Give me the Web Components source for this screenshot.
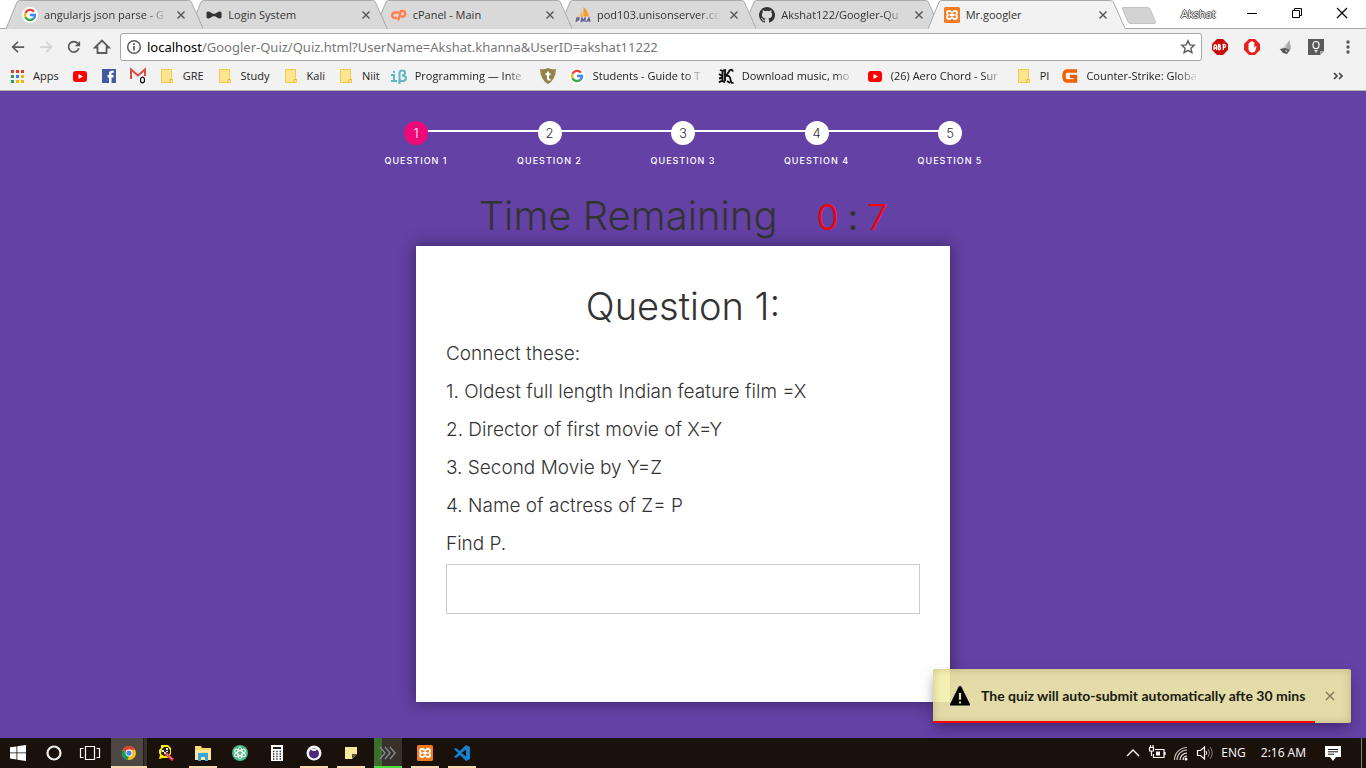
<!DOCTYPE html>
<html lang="en">
<head>
<meta charset="utf-8">
<title>Mr.googler</title>
<style>
  html, body { margin: 0; height: 100%; }
  body { font: 12px/16px "Open Sans", "Noto Sans", sans-serif; color: #222; }
</style>
</head>
<body>
<desktop-screen></desktop-screen>
<script>
const ICONS = {
  google: '<circle cx="8" cy="8" r="8" fill="#fff"/><g fill="none" stroke-width="2.4"><path d="M11.9 4.6A5 5 0 0 0 3.5 5.9" stroke="#ea4335"/><path d="M3.5 5.9a5 5 0 0 0 0 4.3" stroke="#fbbc05"/><path d="M3.5 10.2a5 5 0 0 0 8 1.4" stroke="#34a853"/><path d="M8 8h5a5 5 0 0 1-1.6 3.7" stroke="#4285f4"/></g>',
  bowtie: '<path d="M.5 5.500Q1.500 4 3.500 4.800L7 6.800h2l3.500-2q2-.8 3 .7v5q-1 1.500-3 .7L9 9.200H7l-3.500 2q-2 .8-3-.7z" fill="#333"/>',
  cpanel: '<g fill="none" stroke="#ff7f50" stroke-width="2.4" stroke-linecap="round" stroke-linejoin="round"><path d="M7 5.5H4a2.7 2.7 0 0 0 0 5.5h1.3"/><path d="M7.5 12.5 9.8 4H12a2.8 2.8 0 0 1 0 5.5h-1.5"/></g>',
  pma: '<path d="M4 9q2-1 3-6l1 6z" fill="#f9b35c"/><path d="M8.500 9V0q5 4 5 9z" fill="#f89c2a"/><path d="M2 9.500h13" stroke="#fbc98c"/><g fill="none" stroke="#5f618d" stroke-width="1.300"><path d="M1 15l1-4h2l-.5 2H2M6 15l1-4 1 3 2-3v4M11.500 15l2.500-4 1 4m-2-1.500h2"/></g>',
  github: '<path fill="#333" fill-rule="evenodd" d="M8 0a8 8 0 0 0-2.530 15.590c.4.070.550-.170.550-.380v-1.490c-2.010.370-2.530-.490-2.690-.940-.090-.230-.480-.940-.820-1.130-.280-.150-.680-.520-.010-.530.630-.010 1.080.580 1.230.820.720 1.210 1.870.870 2.330.660.070-.520.280-.870.510-1.070-1.780-.200-3.640-.890-3.640-3.950 0-.870.310-1.590.820-2.150-.080-.200-.360-1.020.080-2.120 0 0 .670-.210 2.200.820a7.500 7.500 0 0 1 4 0c1.530-1.040 2.200-.820 2.200-.820.440 1.100.160 1.920.080 2.120.510.560.820 1.270.820 2.150 0 3.070-1.870 3.750-3.650 3.950.290.250.540.730.540 1.480v2.200c0 .210.150.460.550.380A8 8 0 0 0 8 0z"/>',
  xampp: '<rect width="16" height="16" rx="1.500" fill="#f47b20"/><path d="M5 4h1.200L8 6 9.800 4H11q2 0 2 2 0 1.200-1 2 1 .8 1 2 0 2-2 2H9.800L8 10l-1.800 2H5q-2 0-2-2 0-1.200 1-2-1-.8-1-2 0-2 2-2zM5.500 8h5" fill="none" stroke="#fff" stroke-width="1.800" stroke-linejoin="round"/>',
  close: '<path d="M4 4l8 8M12 4l-8 8" stroke="#5a5a5a" stroke-width="1.700"/>',
  back: '<path d="M15 8H2M8 2 2 8l6 6" fill="none" stroke="#5a5a5a" stroke-width="2"/>',
  forward: '<path d="M1 8h13M8 2l6 6-6 6" fill="none" stroke="#d2d2d2" stroke-width="2"/>',
  reload: '<path d="M13.500 9.500A6 6 0 1 1 12.300 3.800" fill="none" stroke="#5a5a5a" stroke-width="2"/><path d="M15 1v6H9z" fill="#5a5a5a"/>',
  home: '<path d="M1 8.500 8 1.500l7 7h-2.500V14h-9V8.500z" fill="none" stroke="#5a5a5a" stroke-width="1.800"/>',
  info: '<circle cx="8" cy="8" r="6.300" fill="none" stroke="#5a5a5a" stroke-width="1.500"/><path d="M8 7v4.500M8 4.300V6" stroke="#5a5a5a" stroke-width="1.700"/>',
  star: '<path d="M8 1.800l1.800 4.100 4.400.4-3.300 3 1 4.300L8 11.300l-3.900 2.300 1-4.300-3.300-3 4.400-.4z" fill="none" stroke="#5a5a5a" stroke-width="1.400"/>',
  abp: '<path d="M5 0h6l5 5v6l-5 5H5l-5-5V5z" fill="#c70d0c"/><g fill="none" stroke="#fff" stroke-width="1.300"><path d="M2 11V7q1.300-2.500 2.600 0v4M2 9h2.600M6.500 5.500V10.500h1.300q1.500-1.500-.2-2.600 1.500-1-.2-2.300zM11.300 11V5.500h1.300q2 1.500 0 2.900h-1.300"/></g>',
  hand: '<path d="M5 0h6l5 5v6l-5 5H5l-5-5V5z" fill="#e8231f"/><path d="M4.500 4.500q.7-.8 1.300 0V7V3q.8-1 1.500 0v4-4.500q.8-.9 1.500 0V7 3.300q.8-.8 1.500 0v5.500l1.200-1.500q1-.3 1 .7L11 12.500q-3 2-5.500 0l-1-2z" fill="#fff"/>',
  rocket: '<path d="M13.500 1 15 10l-5 3-6-2q5-3 9.500-10z" fill="#aaa"/><path d="M13 3l-5 8H2q7-2 11-8z" fill="#ddd"/><path d="M4 10l5-1 5 2-3 4-4-1z" fill="#555"/><path d="m9 11 3 1-2 1z" fill="#ddd"/>',
  bulb: '<path d="M0 0h16v12l-4 4H0z" fill="#5a5a5a"/><path d="M16 12l-4 4v-4z" fill="#aaa"/><path d="M6.500 9.500C5 8 4.700 6.700 5 5.500a3 3 0 0 1 6 0c.3 1.200 0 2.500-1.500 4zM6.500 11.500h3M7 13h2" fill="none" stroke="#fff" stroke-width="1.200"/>',
  menu: '<g fill="#5a5a5a"><circle cx="8" cy="3" r="1.700"/><circle cx="8" cy="8" r="1.700"/><circle cx="8" cy="13" r="1.700"/></g>',
  apps: '<path fill="#e33b2e" d="M2 2h3v3H2zM7 2h3v3H7zM12 2h3v3h-3z"/><path fill="#2ba24c" d="M2 7h3v3H2zM2 12h3v3H2z"/><path fill="#3b7ded" d="M7 7h3v3H7z"/><path fill="#f4b400" d="M12 7h3v3h-3zM7 12h3v3H7zM12 12h3v3h-3z"/>',
  youtube: '<rect x="1" y="3" width="14" height="11" rx="3" fill="#f00"/><path d="M6.500 6v5L11 8.500z" fill="#fff"/>',
  facebook: '<rect x="1" y="1" width="14" height="14" fill="#4359a2"/><path d="M10.500 15V9.500h2V7h-2V5.800q0-1 1.200-1h1.100V2.700h-2Q8 2.700 8 5.500V7H6.500v2.500H8V15z" fill="#fff"/>',
  gmail: '<path d="M0 1h16v10H0z" fill="#eee"/><path d="M1 11V1.500l7 6 7-6V8" fill="none" stroke="#dd4b41" stroke-width="2"/><rect x="9" y="8" width="7" height="8" fill="#fff"/><ellipse cx="12.500" cy="12" rx="2" ry="2.900" fill="none" stroke="#000" stroke-width="1.200"/>',
  folder: '<path d="M2.500 1.500h10v9l1 1v3h-11z" fill="#ffe590" stroke="#efc84f"/><path d="M11 14.500v-3h2.500" fill="none" stroke="#e8b92f"/>',
  ibeta: '<g fill="none" stroke="#5eb8c8" stroke-width="2"><path d="M0 7h3v6M0 13h6"/><path d="M8.500 16V5q0-2.500 3-2.500 2.500 0 2.500 2.300T11 7.500q4 0 4 2.700T11.500 13q-2 0-3-1"/></g><rect x="2" y="3" width="2" height="2" fill="#5eb8c8"/>',
  shield: '<path d="M8 0q4 2 8 1-.500 11-8 15Q.5 12 0 1q4 1 8-1z" fill="#94824b"/><path d="M8 3.500v7q0 1.500 2.500 1M5.500 6.200h5" fill="none" stroke="#fff" stroke-width="2"/>',
  gothic: '<g fill="none" stroke="#111"><path d="M2 2q3 1.500 6-.500M4.500 3v10M7 2v11M1 14.500q3-3 6 0M8 8l4-6q2-1 3 1.500M8 8q4-1 4.500 3.500t3 3M9 13l3 2M1 6l3 2M1 10.500l4-1" stroke-width="1.900"/></g>',
  gamer: '<path d="M15 3H5Q2 3 2 8t3 5h8.500V8.500H8" fill="none" stroke="#f26100" stroke-width="3.500"/>',
  more: '<path d="M4 5l3 3-3 3M9 5l3 3-3 3" fill="none" stroke="#444" stroke-width="1.700"/>',
  minimize: '<path d="M3 8.500h10" stroke="#000"/>',
  restore: '<path d="M3.500 5.500h7v7h-7zM5.500 5.500v-2h7v7h-2" fill="none" stroke="#000"/>',
  exit: '<path d="M3 3l10 10M13 3 3 13" stroke="#000" stroke-width="1.200"/>',
  windows: '<path d="M0 2.300 6.500 1.400v6.100H0zM7.300 1.300 16 0v7.500H7.300zM0 8.300h6.500v6.200L0 13.600zM7.300 8.300H16V16l-8.700-1.300z" fill="#fff"/>',
  cortana: '<circle cx="8" cy="8" r="6.500" fill="none" stroke="#eee" stroke-width="2.200"/>',
  taskview: '<path d="M3.500 1.500h9v13h-9zM1.500 3.500h-3v9h3M14.500 3.500h3v9h-3" fill="none" stroke="#fff" stroke-width="1.200"/>',
  chrome: '<circle cx="8" cy="8" r="7" fill="#fbc116"/><path d="M8 8V1a7 7 0 0 1 6 3.500H8z" fill="#db4437"/><path d="M2 4.300A7 7 0 0 1 14 4.500H8L5 9.500z" fill="#db4437"/><path d="M2 4.300 5 9.500 8 11l-1.500 3.900A7 7 0 0 1 2 4.300z" fill="#0f9d58"/><circle cx="8" cy="8" r="3.400" fill="#fff"/><circle cx="8" cy="8" r="2.600" fill="#4285f4"/>',
  cue: '<path d="M3 0h7l3 3v6l-3 4H5l-4 1 1-4-1-2V5l2-2z" fill="#ffef00"/><path d="M4 4 6 2h4l2 3v3l-2 3H6L3 9z" fill="#222"/><path d="M4 5h2v2H4zM8 3h2v2H8zM6 7h2v2H6zM8 6h2v1H8z" fill="#eee"/><path d="m7 8 8 7" stroke="#e23d4a" stroke-width="3"/><path d="m7 8 7 6" stroke="#fff" stroke-dasharray="1 1.500"/>',
  explorer: '<path d="M0 1h6l1 2h9v12H0z" fill="#f8d775"/><path d="M0 5h16v10H0z" fill="#ffe69a"/><path d="M3 16V8h10v8h-3v-4H6v4z" fill="#3aa5e0"/>',
  atom: '<circle cx="8" cy="8" r="8" fill="#49b983"/><g fill="none" stroke="#fff"><ellipse cx="8" cy="8" rx="2.300" ry="6"/><ellipse cx="8" cy="8" rx="2.300" ry="6" transform="rotate(60 8 8)"/><ellipse cx="8" cy="8" rx="2.300" ry="6" transform="rotate(120 8 8)"/></g>',
  calc: '<rect x="2" width="12" height="16" fill="#fff"/><path d="M4 2h8v2H4z" fill="#222"/><path d="M4 6.500h8M4 9h8M4 11.500h8M4 14h8" stroke="#222" stroke-width="1.300" stroke-dasharray="1.300 2"/>',
  eclipse: '<circle cx="8" cy="8" r="7.500" fill="#f3f3f8"/><circle cx="8" cy="8.500" r="5" fill="#4c2a78"/><path d="M4 4l3 2h2l3-2" fill="#f3f3f8"/>',
  note: '<path d="M2 2h12v7l-5 5H2z" fill="#f5e99a"/><path d="M14 9l-5 5V9z" fill="#5d5636"/>',
  chevrons: '<path d="M0 2l5 6-5 6M5 2l5 6-5 6M10 2l5 6-5 6" fill="none" stroke="#82878a" stroke-width="1.500"/>',
  vscode: '<path d="M12 0l4 2v12l-4 2-6-6-4 3-2-1 4-4-4-4 2-1 4 3zm0 4.500L7.500 8l4.500 3.500z" fill="#1482ce"/>',
  up: '<path d="M2 11l6-6 6 6" fill="none" stroke="#fff" stroke-width="1.400"/>',
  battery: '<path d="M6 4.500h9v8H4.500V9M16 7v3M0 2.500h5M1.500 0v3M4 0v3M.5 3v3h4V3M2.500 6v5" fill="none" stroke="#fff" stroke-width="1.200"/><rect x="7" y="6.500" width="4" height="4" fill="#fff"/>',
  wifi: '<g fill="none" stroke="#fff" stroke-width="1.200"><path d="M10 15a4 4 0 0 1 4-4M7 15a7 7 0 0 1 7-7"/><path d="M4 15A10 10 0 0 1 14 5M1.500 15A12.500 12.500 0 0 1 14 2.500" stroke="#c5c0be"/></g><circle cx="13" cy="14" r="1.500" fill="#fff"/>',
  sound: '<path d="M.5 5.500h3l4-3.500v12l-4-3.500h-3z" fill="none" stroke="#fff" stroke-width="1.200"/><path d="M9 6q1.500 2 0 4" fill="none" stroke="#fff"/><path d="M11 4q3 4 0 8M13 2q4.500 6 0 12" fill="none" stroke="#85807d"/>',
  message: '<path d="M0 1h16v11h-5l-3 4-3-4H0z" fill="#fff"/><path d="M3 4.500h10M3 6.800h10M3 9.200h6" stroke="#1a100b"/>',
  warning: '<path d="M8 0q.8 0 1.300 1L16 14.500V15.500H0v-1L6.700 1Q7.200 0 8 0z" fill="#000"/><path d="M8 5.500V11M8 12.300v1.700" stroke="#e4dcaa" stroke-width="1.800"/>',
  dismiss: '<path d="M4 4l8 8M12 4l-8 8" stroke="#77735a" stroke-width="1.100"/>'
};

const RESET = `
  *, *::before, *::after { box-sizing: border-box; }
  button { border: 0; padding: 0; margin: 0; background: none; font: inherit; color: inherit; display: flex; align-items: center; justify-content: center; }
  a { color: inherit; text-decoration: none; }
`;

class Base extends HTMLElement {
  connectedCallback() {
    if (this.shadowRoot) return;
    this.attachShadow({ mode: 'open' }).innerHTML =
      `<style>${RESET}${this.styles()}</style>${this.markup()}`;
  }
}

customElements.define('ui-icon', class extends Base {
  styles() {
    return `:host { display: block; flex: none; width: var(--size, 16px); height: var(--size, 16px); }
      svg { display: block; width: 100%; height: 100%; overflow: visible; }`;
  }
  markup() {
    return `<svg viewBox="0 0 16 16" aria-hidden="true">${ICONS[this.getAttribute('name')]}</svg>`;
  }
});

customElements.define('browser-tab', class extends Base {
  styles() {
    return `:host { display: flex; align-items: center; position: relative; flex: 1 1 0; min-width: 0; height: 29px;
        padding: 1px 14px 0 16px; margin-right: -13px; --fill: #d9d9d9; font-size: 11px; }
      :host([active]) { --fill: #f2f2f2; z-index: 10; }
      .shape { position: absolute; inset: 0; width: 100%; height: 100%; }
      .shape path { fill: var(--fill); stroke: #a8a8a8; vector-effect: non-scaling-stroke; }
      .tab { position: relative; flex: 1; min-width: 0; justify-content: flex-start; gap: 6px; height: 28px; }
      .title { flex: 1; min-width: 0; text-align: left; white-space: nowrap; overflow: hidden; color: #333; }
      :host([fade]) .title { -webkit-mask-image: linear-gradient(90deg, #000 82%, transparent); mask-image: linear-gradient(90deg, #000 82%, transparent); }
      .x { position: relative; width: 16px; height: 28px; margin-left: 5px; --size: 14px; }`;
  }
  markup() {
    return `<svg class="shape" viewBox="0 0 197 29" preserveAspectRatio="none" aria-hidden="true"><path d="M0 29 11 2Q12 .5 14 .5H182Q184 .5 185 2L197 29"/></svg>
      <button class="tab" role="tab"><ui-icon name="${this.getAttribute('icon')}"></ui-icon><span class="title"><slot></slot></span></button>
      <button class="x" aria-label="Close tab"><ui-icon name="close"></ui-icon></button>`;
  }
});

customElements.define('tab-strip', class extends Base {
  styles() {
    return `:host { display: flex; height: 29px; padding-right: 2px; background: #fff; border-bottom: 1px solid #a8a8a8; }
      .tabs { display: flex; flex: 1; min-width: 0; height: 29px; padding: 0 9px 0 6px; position: relative; z-index: 1; }
      .tabs > :nth-child(1) { z-index: 6; } .tabs > :nth-child(2) { z-index: 5; } .tabs > :nth-child(3) { z-index: 4; }
      .tabs > :nth-child(4) { z-index: 3; } .tabs > :nth-child(5) { z-index: 2; }
      .add { width: 36px; height: 17px; margin-top: 7px; }
      .add svg { display: block; }
      .user { margin: 6px 13px 0 24px; width: 35px; font-size: 11px; color: #fff; white-space: nowrap;
        text-shadow: 1px 0 #555, -1px 0 #555, 0 1px #555, 0 -1px #555; }
      .win { width: 45px; height: 26px; }`;
  }
  markup() {
    return `<div class="tabs" role="tablist">
        <browser-tab icon="google" fade>angularjs json parse - G</browser-tab>
        <browser-tab icon="bowtie">Login System</browser-tab>
        <browser-tab icon="cpanel">cPanel - Main</browser-tab>
        <browser-tab icon="pma" fade>pod103.unisonserver.cc</browser-tab>
        <browser-tab icon="github" fade>Akshat122/Googler-Qu</browser-tab>
        <browser-tab icon="xampp" active>Mr.googler</browser-tab>
      </div>
      <button class="add" aria-label="New tab"><svg width="36" height="17"><path d="M1 1Q1 .5 3 .5H26Q28 .5 29 2L34.500 14.500Q35 16.500 33 16.500H10Q8 16.500 7 15z" fill="#d3d3d3" stroke="#c2c2c2"/></svg></button>
      <span class="user">Akshat</span>
      <button class="win" aria-label="Minimize"><ui-icon name="minimize"></ui-icon></button>
      <button class="win" aria-label="Restore"><ui-icon name="restore"></ui-icon></button>
      <button class="win" aria-label="Close"><ui-icon name="exit"></ui-icon></button>`;
  }
});

customElements.define('nav-bar', class extends Base {
  styles() {
    return `:host { display: flex; align-items: center; height: 36px; padding-right: 2px; background: #f2f2f2; }
      .nav { display: flex; padding: 0 4px; }
      .nav button { width: 28px; height: 28px; --size: 14px; }
      .nav button:last-child { --size: 16px; }
      .box { display: flex; flex: 1; align-items: center; height: 28px; padding: 0 5px; background: #fff; border: 1px solid #a6a6a6; border-radius: 3px;
        font: 13px/20px "Noto Sans", "Open Sans", sans-serif; color: #000; }
      .box ui-icon { margin-right: 5px; }
      .box > button { margin-left: auto; }
      .box > button ui-icon { margin: 0; }
      input { flex: 1; min-width: 0; border: 0; padding: 0; outline: 0; font: inherit; color: #777; background: none; }
      .ext { display: flex; padding-left: 2px; }
      .ext button { width: 32px; height: 28px; }
    `;
  }
  markup() {
    return `<div class="nav">
        <button aria-label="Back"><ui-icon name="back"></ui-icon></button>
        <button aria-label="Forward"><ui-icon name="forward"></ui-icon></button>
        <button aria-label="Reload"><ui-icon name="reload"></ui-icon></button>
        <button aria-label="Home"><ui-icon name="home"></ui-icon></button>
      </div>
      <div class="box"><ui-icon name="info"></ui-icon><label for="url">localhost</label><input id="url" value="/Googler-Quiz/Quiz.html?UserName=Akshat.khanna&amp;UserID=akshat11222"><button aria-label="Bookmark"><ui-icon name="star"></ui-icon></button></div>
      <div class="ext">
        <button aria-label="Adblock Plus"><ui-icon name="abp"></ui-icon></button>
        <button aria-label="AdBlock"><ui-icon name="hand"></ui-icon></button>
        <button aria-label="Accelerator"><ui-icon name="rocket"></ui-icon></button>
        <button aria-label="Keep"><ui-icon name="bulb"></ui-icon></button>
        <button aria-label="Menu"><ui-icon name="menu"></ui-icon></button>
      </div>`;
  }
});

customElements.define('bookmark-bar', class extends Base {
  styles() {
    return `:host { display: flex; align-items: center; gap: 11px; height: 26px; padding: 0 20px 4px 9px; background: #f2f2f2; border-bottom: 1px solid #b0b0b0; color: #222; font-size: 11px; }
      nav { display: flex; align-items: center; gap: 13px; }
      a { display: flex; align-items: center; gap: 8px; white-space: nowrap; flex: none; }
      .long span { width: 112px; overflow: hidden; -webkit-mask-image: linear-gradient(90deg, #000 82%, transparent); mask-image: linear-gradient(90deg, #000 82%, transparent); }
      button { margin-left: auto; }`;
  }
  markup() {
    const sites = [['apps', 'Apps'], ['youtube', ''], ['facebook', ''], ['gmail', ''], ['folder', 'GRE'], ['folder', 'Study'],
      ['folder', 'Kali'], ['folder', 'Niit']];
    const pages = [['ibeta', 'Programming — Inte', 1], ['shield', ''], ['google', 'Students - Guide to T', 1],
      ['gothic', 'Download music, mo', 1], ['youtube', '(26) Aero Chord - Sur', 1], ['folder', 'PI'], ['gamer', 'Counter-Strike: Globa', 1]];
    const group = items => `<nav>${items.map(([icon, text, long]) =>
      `<a href="#" ${long ? 'class="long"' : ''} ${text ? '' : `aria-label="${icon}"`}><ui-icon name="${icon}"></ui-icon>${text ? `<span>${text}</span>` : ''}</a>`).join('')}</nav>`;
    return group(sites) + group(pages) + '<button aria-label="More bookmarks"><ui-icon name="more"></ui-icon></button>';
  }
});

customElements.define('quiz-progress', class extends Base {
  styles() {
    return `:host { display: block; width: 125%; align-self: center; }
      ol { display: flex; list-style: none; margin: 0; padding: 0; }
      li { position: relative; flex: 1; display: flex; flex-direction: column; align-items: center; gap: 8px;
        font: 500 9px/16px Inter, sans-serif; letter-spacing: 1px; color: #fff; text-transform: uppercase; }
      b { position: relative; width: 24px; height: 24px; border-radius: 50%; background: #fff; color: #333; font: 300 13px/25px Inter, sans-serif; letter-spacing: 0; text-align: center; }
      li.on b { background: #ee0979; color: #fff; }
      li + li::before { content: ""; position: absolute; top: 9px; right: 50%; width: 100%; height: 2px; background: #fff; }
      li { z-index: 0; }
      li:nth-child(1) { z-index: 5; } li:nth-child(2) { z-index: 4; } li:nth-child(3) { z-index: 3; } li:nth-child(4) { z-index: 2; }`;
  }
  markup() {
    return `<ol>${[1, 2, 3, 4, 5].map(n => `<li ${n === 1 ? 'class="on" aria-current="step"' : ''}><b>${n}</b><span>Question ${n}</span></li>`).join('')}</ol>`;
  }
});

customElements.define('quiz-timer', class extends Base {
  styles() {
    return `:host { display: flex; justify-content: center; align-items: baseline; gap: 39px; color: #333; font: 300 40px/40px Inter, sans-serif; white-space: nowrap; }
      h2, p { margin: 0; font: inherit; }
      p { display: flex; gap: 9px; font-size: 36px; line-height: 36px; }
      .n { color: #f00; }
      .colon { font-weight: 400; }`;
  }
  markup() {
    return `<h2>Time Remaining</h2><p role="timer"><span class="n">0</span><span class="colon">:</span><span class="n">7</span></p>`;
  }
});

customElements.define('quiz-card', class extends Base {
  styles() {
    return `:host { display: block; min-height: 456px; padding: 40px 30px; background: #fff; box-shadow: 0 0 15px 1px rgba(0,0,0,.4); color: #333;
        font: 300 19px/28px Inter, sans-serif; }
      h2 { margin: 0 0 14px; font: 300 38px/40px Inter, sans-serif; text-align: center; }
      p { margin: 0 0 10px; }
      label { display: block; margin-bottom: 6px; }
      input { display: block; width: 100%; height: 50px; padding: 15px; border: 1px solid #ccc; background: #fff; font: inherit; outline: 0; }`;
  }
  markup() {
    return `<h2>Question 1:</h2>
      <p>Connect these:</p><p>1. Oldest full length Indian feature film =X</p><p>2. Director of first movie of X=Y</p>
      <p>3. Second Movie by Y=Z</p><p>4. Name of actress of Z= P</p>
      <label for="answer">Find P.</label><input id="answer" type="text">`;
  }
});

customElements.define('toast-note', class extends Base {
  styles() {
    return `:host { position: absolute; right: 15px; bottom: 15px; display: flex; align-items: center; width: 418px; height: 54px; padding: 0 13px 0 17px;
        background: rgba(243,238,168,.89); border-radius: 2px; box-shadow: inset 0 0 8px rgba(120,110,40,.35), 0 6px 12px -2px rgba(30,10,60,.5); color: #1b1a10;
        font: 700 14px/20px Lato, sans-serif; white-space: nowrap; }
      .icon { --size: 20px; margin-right: 11px; }
      button { margin-left: auto; }
      .bar { position: absolute; left: 0; bottom: 0; width: 382px; height: 2px; background: #f00; }`;
  }
  markup() {
    return `<ui-icon class="icon" name="warning"></ui-icon><slot></slot>
      <button aria-label="Dismiss"><ui-icon name="dismiss"></ui-icon></button><div class="bar" role="progressbar"></div>`;
  }
});

customElements.define('quiz-page', class extends Base {
  styles() {
    return `:host { position: relative; display: flex; justify-content: center; padding: 30px 16px 36px; background: #6441a5; overflow: hidden; }
      main { display: flex; flex-direction: column; width: 534px; max-width: 100%; }
      quiz-timer { margin: 27px 0 10px; }`;
  }
  markup() {
    return `<main><quiz-progress></quiz-progress><quiz-timer></quiz-timer><quiz-card></quiz-card></main>
      <toast-note role="status">The quiz will auto-submit automatically afte 30 mins</toast-note>`;
  }
});

customElements.define('task-bar', class extends Base {
  styles() {
    return `:host { display: flex; justify-content: space-between; height: 30px; background: #1b110b; color: #fff; }
      .sys, .apps, .tray { display: flex; align-items: center; }
      .sys button { width: 36px; height: 30px; }
      .apps { gap: 9px; padding-left: 7px; flex: 1; }
      .apps button { width: 28px; height: 30px; border-bottom: 2px solid transparent; padding-top: 2px; }
      .apps .open { border-color: #fad7b0; }
      .apps .current { width: 36px; margin: 0 -4px; background: linear-gradient(90deg, #4d4642 32px, #241b15 32px, #241b15 33px, #37302b 33px); }
      .apps .busy { border-color: #48e03c; background: linear-gradient(90deg, #3b6d2e 8px, #37302b 8px); }
      .tray ui-icon { margin-right: 8px; }
      .tray .lang { margin-right: 15px; }
      .tray .time { margin-right: 19px; }
      .tray .last { margin-right: 20px; }
      .tray button.desk { width: 5px; height: 30px; border-left: 1px solid #857c76; }`;
  }
  markup() {
    const apps = [['chrome', 'open current'], ['cue', ''], ['explorer', 'open'], ['atom', ''], ['calc', ''], ['eclipse', 'open'],
      ['note', 'open'], ['chevrons', 'busy'], ['xampp', 'open'], ['vscode', 'open']];
    return `<div class="sys">${['windows', 'cortana', 'taskview'].map(n => `<button aria-label="${n}"><ui-icon name="${n}"></ui-icon></button>`).join('')}</div>
      <div class="apps">${apps.map(([n, c]) => `<button class="${c}" aria-label="${n}"><ui-icon name="${n}"></ui-icon></button>`).join('')}</div>
      <div class="tray">${['up', 'battery', 'wifi', 'sound'].map(n => `<ui-icon name="${n}"></ui-icon>`).join('')}
        <span class="lang">ENG</span><span class="time">2:16 AM</span><ui-icon class="last" name="message"></ui-icon><button class="desk" aria-label="Show desktop"></button></div>`;
  }
});

customElements.define('desktop-screen', class extends Base {
  styles() {
    return `:host { display: flex; flex-direction: column; min-height: 100vh; }
      quiz-page { flex: 1; }`;
  }
  markup() {
    return `<tab-strip></tab-strip><nav-bar></nav-bar><bookmark-bar></bookmark-bar><quiz-page></quiz-page><task-bar></task-bar>`;
  }
});
</script>
</body>
</html>
